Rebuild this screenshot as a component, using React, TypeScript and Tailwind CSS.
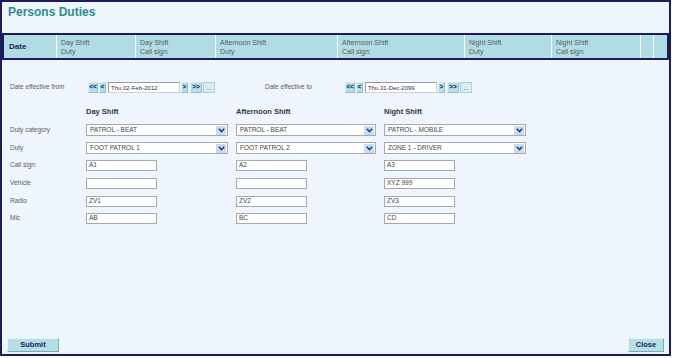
import React from 'react'

const font = "font-['Liberation_Sans',Arial,sans-serif]"

const headerCells = [
  { w: 'w-[79px]', a: 'Day Shift', b: 'Duty' },
  { w: 'w-[80px]', a: 'Day Shift', b: 'Call sign:' },
  { w: 'w-[122px]', a: 'Afternoon Shift', b: 'Duty' },
  { w: 'w-[127px]', a: 'Afternoon Shift', b: 'Call sign:' },
  { w: 'w-[87px]', a: 'Night Shift', b: 'Duty' },
  { w: 'w-[89px]', a: 'Night Shift', b: 'Call sign:' },
]

function NavBtn({ w, children }: { w: string; children: React.ReactNode }) {
  return (
    <div className={`${w} h-[11px] bg-[#b5e0e6] border border-[#d8eff2] border-r-[#8fbfc6] border-b-[#8fbfc6] flex items-center justify-center text-[6.5px] font-bold text-[#1c1c6c] leading-none`}>
      {children}
    </div>
  )
}

function DateNav({ value }: { value: string }) {
  return (
    <div className="flex items-center w-[127px]">
      <NavBtn w="w-[10px]">&lt;&lt;</NavBtn>
      <div className="w-[1px]" />
      <NavBtn w="w-[7px]">&lt;</NavBtn>
      <div className="ml-[2px] w-[72px] h-[11px] bg-white border border-[#9a9a9a] border-r-[#d0d0d0] border-b-[#d0d0d0] flex items-center pl-[2px] text-[6px] text-[#333] leading-none">
        {value}
      </div>
      <div className="w-[1px]" />
      <NavBtn w="w-[7px]">&gt;</NavBtn>
      <div className="w-[2px]" />
      <NavBtn w="w-[12px]">&gt;&gt;</NavBtn>
      <div className="w-[1px]" />
      <div className="w-[12px] h-[11px] bg-[#d6eef2] border border-[#a9cfd5] flex items-center justify-center text-[6px] text-[#1c1c6c] leading-none">
        ...
      </div>
    </div>
  )
}

function Select({ w, value }: { w: string; value: string }) {
  return (
    <div className={`${w} h-[12px] bg-white border border-[#a8a8a8] flex items-center justify-between pl-[3px] pr-[1px]`}>
      <span className="text-[6.5px] text-[#444] leading-none">{value}</span>
      <div className="w-[10px] h-[9px] bg-[#c9dcef] flex items-center justify-center">
        <svg width="7" height="5" viewBox="0 0 7 5">
          <path d="M0.8 0.8 L3.5 3.6 L6.2 0.8" fill="none" stroke="#1c3c8c" strokeWidth="1.5" />
        </svg>
      </div>
    </div>
  )
}

function Input({ value }: { value: string }) {
  return (
    <div className="w-[71px] h-[11px] bg-white border border-[#a8a8a8] flex items-center pl-[2px] text-[6.5px] text-[#444] leading-none">
      {value}
    </div>
  )
}

function Row({ label, mt, children }: { label: string; mt: string; children: React.ReactNode }) {
  return (
    <div className={`flex items-center ${mt}`}>
      <div className="w-[76px] text-[6.5px] text-[#5c5c5c] leading-none">{label}</div>
      {children}
    </div>
  )
}

export default function App() {
  return (
    <div className={`w-[674px] h-[358px] bg-white ${font}`}>
      <div className="w-[671px] h-[356px] border-2 border-[#1c1c5c] bg-[#eef5fc] flex flex-col">
        {/* Title */}
        <div className="h-[31px] pl-[6px] pt-[2px]">
          <h1 className="text-[12px] font-bold text-[#2e8b8b] leading-[16px]">Persons Duties</h1>
        </div>

        {/* Header bar */}
        <div className="h-[27px] border-2 border-[#1c1c5c] bg-[#b0dde3] flex">
          <div className="w-[53px] border-r border-white flex items-center pl-[5px] text-[8px] font-bold text-[#1c1c5c]">
            Date
          </div>
          {headerCells.map((c, i) => (
            <div key={i} className={`${c.w} border-r border-white pl-[4px] pt-[3px] text-[7px] leading-[9px] text-[#5a5a5a]`}>
              <div>{c.a}</div>
              <div>{c.b}</div>
            </div>
          ))}
          <div className="w-[13px] border-r border-white" />
          <div className="w-[13px]" />
        </div>

        {/* Form */}
        <div className="pl-[8px]">
          <div className="flex items-center mt-[22px]">
            <div className="w-[78px] text-[6.5px] text-[#5c5c5c] leading-none">Date effective from</div>
            <DateNav value="Thu 02-Feb-2012" />
            <div className="w-[50px]" />
            <div className="w-[80px] text-[6.5px] text-[#5c5c5c] leading-none">Date effective to</div>
            <DateNav value="Thu 31-Dec-2099" />
          </div>

          <div className="flex items-center mt-[14px] h-[9px] text-[7.5px] font-bold text-[#33334d] leading-none">
            <div className="w-[76px]" />
            <div className="w-[150px]">Day Shift</div>
            <div className="w-[148px]">Afternoon Shift</div>
            <div>Night Shift</div>
          </div>

          <Row label="Duty category" mt="mt-[8px]">
            <div className="w-[150px]"><Select w="w-[142px]" value="PATROL - BEAT" /></div>
            <div className="w-[148px]"><Select w="w-[140px]" value="PATROL - BEAT" /></div>
            <Select w="w-[142px]" value="PATROL - MOBILE" />
          </Row>
          <Row label="Duty" mt="mt-[6px]">
            <div className="w-[150px]"><Select w="w-[142px]" value="FOOT PATROL 1" /></div>
            <div className="w-[148px]"><Select w="w-[140px]" value="FOOT PATROL 2" /></div>
            <Select w="w-[142px]" value="ZONE 1 - DRIVER" />
          </Row>
          {[
            ['Call sign:', 'A1', 'A2', 'A3', 'mt-[6px]'],
            ['Vehicle', '', '', 'XYZ 999', 'mt-[7px]'],
            ['Radio', 'ZV1', 'ZV2', 'ZV3', 'mt-[7px]'],
            ['Mic', 'AB', 'BC', 'CD', 'mt-[6px]'],
          ].map(([label, a, b, c, mt]) => (
            <Row key={label} label={label} mt={mt}>
              <div className="w-[150px]"><Input value={a} /></div>
              <div className="w-[148px]"><Input value={b} /></div>
              <Input value={c} />
            </Row>
          ))}
        </div>

        {/* Footer buttons */}
        <div className="mt-auto flex justify-between pl-[5px] pr-[5px] pb-[2px]">
          <button className="w-[52px] h-[14px] bg-[#b3dfe5] border border-[#e4f4f6] border-r-[#7fa9b0] border-b-[#7fa9b0] text-[7.5px] font-bold text-[#1c1c6c] leading-none">
            Submit
          </button>
          <button className="w-[36px] h-[14px] bg-[#b3dfe5] border border-[#e4f4f6] border-r-[#7fa9b0] border-b-[#7fa9b0] text-[7.5px] font-bold text-[#1c1c6c] leading-none">
            Close
          </button>
        </div>
      </div>
    </div>
  )
}
